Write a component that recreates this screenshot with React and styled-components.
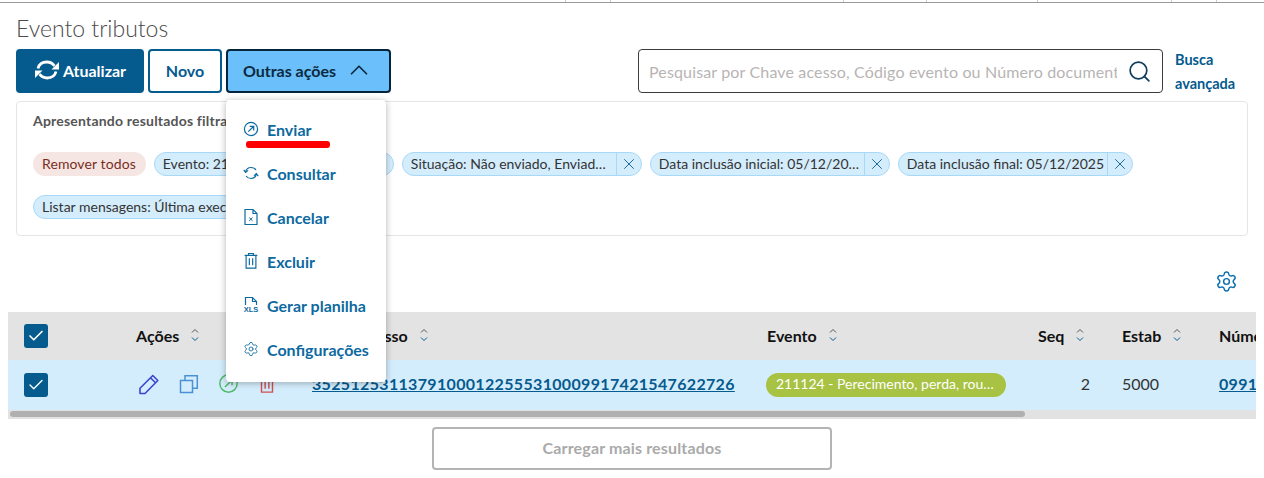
import React from 'react'
import styled, { createGlobalStyle } from 'styled-components'
import { Check, ChevronUp, Search, Settings, X } from 'lucide-react'

const GlobalStyle = createGlobalStyle`
  html, body {
    margin: 0;
    background: #fff;
    overflow: hidden;
  }
  body {
    font-family: Lato, "Open Sans", sans-serif;
    color: #333;
  }
  * {
    box-sizing: border-box;
  }
`

const PRIMARY = '#055a8e'
const COLUMNS = '128px 176px 455px 271px 84px 97px 1fr'
const TICKS = [566, 45, 233, 83, 111, 134, 45]

const SyncIcon = ({ size = 26 }) => (
  <svg width={size} height={size} viewBox="0 0 26 26" fill="none" stroke="currentColor" strokeWidth="2.8">
    <path d="M4 11.500C5 7.500 8.500 5 12.800 5c3.200 0 5.800 1.400 7.600 3.800" />
    <path d="M22 14.500c-1 4-4.500 6.500-8.800 6.500-3.200 0-5.800-1.400-7.600-3.800" />
    <path d="M25 5v7.500h-7.500z" fill="currentColor" stroke="none" />
    <path d="M1 21v-7.500h7.500z" fill="currentColor" stroke="none" />
  </svg>
)

const SendIcon = ({ size = 16, width = 1.2 }) => (
  <svg width={size} height={size} viewBox="0 0 16 16" fill="none" stroke="currentColor" strokeWidth={width}>
    <circle cx="8" cy="8" r="6.600" />
    <path d="M5.300 10.700 10.500 5.500M6.600 5.300h4.100v4.100" />
  </svg>
)

const RefreshIcon = () => (
  <svg width="16" height="16" viewBox="0 0 16 16" fill="none" stroke="currentColor" strokeWidth="1.200">
    <path d="M2.600 7C3.200 4.200 5.400 2.500 8 2.500c2 0 3.800.9 5 2.500" />
    <path d="M13.400 9c-.6 2.800-2.800 4.500-5.400 4.500-2 0-3.800-.9-5-2.500" />
    <path d="M.8 4.800 2.600 7.400l2.500-2M15.200 11.200 13.400 8.600l-2.500 2" />
  </svg>
)

const FileXIcon = () => (
  <svg width="16" height="18" viewBox="0 0 16 18" fill="none" stroke="currentColor" strokeWidth="1.200">
    <path d="M2 1.500h8l4 4v11H2zM10 1.500v4h4" />
    <path d="m6.200 9.500 3.400 3.400m0-3.400-3.400 3.400" strokeWidth="1" />
  </svg>
)

const TrashIcon = ({ size = 16, width = 1.2 }) => (
  <svg width={size} height={size * 1.1} viewBox="0 0 16 18" fill="none" stroke="currentColor" strokeWidth={width}>
    <path d="M1.500 3.500h13M5.500 3.500V1.500h5v2M3 3.500v13h10v-13M6.300 6.500v7M9.700 6.500v7" />
  </svg>
)

const XlsIcon = () => (
  <svg width="16" height="18" viewBox="0 0 16 18" fill="none" stroke="currentColor" strokeWidth="1.200">
    <path d="M2.500 9V1.500h7l4 4V9M9.500 1.500v4h4" />
    <text x="8" y="16" textAnchor="middle" fontSize="7.500" fontWeight="700" fill="currentColor" stroke="none" fontFamily="Liberation Sans, sans-serif">XLS</text>
  </svg>
)

const PencilIcon = () => (
  <svg width="22" height="22" viewBox="0 0 22 22" fill="none" stroke="currentColor" strokeWidth="1.600" strokeLinejoin="round">
    <path d="M2 20.500v-5.200L14.800 2.500l5 5L7 20.500zM12.500 4.800l5 5" />
  </svg>
)

const CopyIcon = () => (
  <svg width="20" height="20" viewBox="0 0 20 20" fill="none" stroke="currentColor" strokeWidth="1.500">
    <path d="M1.500 6.500h12v12h-12zM6 6.500V1.800h12.300v12.400h-4.800" />
  </svg>
)

const SortIcon = () => (
  <svg width="10" height="16" viewBox="0 0 10 16" fill="none" stroke="currentColor" strokeWidth="1">
    <path d="M2 5.500 5 2.500l3 3" stroke="#555" />
    <path d="M2 10.500 5 13.500l3-3" stroke={PRIMARY} />
  </svg>
)

const MENU = [
  { label: 'Enviar', icon: <SendIcon />, marked: true },
  { label: 'Consultar', icon: <RefreshIcon /> },
  { label: 'Cancelar', icon: <FileXIcon /> },
  { label: 'Excluir', icon: <TrashIcon /> },
  { label: 'Gerar planilha', icon: <XlsIcon /> },
  { label: 'Configurações', icon: <Settings size={16} strokeWidth={1.3} /> },
]

const FILTERS = [
  'Evento: 211124 - Perecimento, perda, roubo',
  'Situação: Não enviado, Enviado, Rejeitado',
  'Data inclusão inicial: 05/12/2025',
  'Data inclusão final: 05/12/2025',
  'Listar mensagens: Última execução',
]

const HEADERS = ['Ações', 'Chave acesso', 'Evento', 'Seq', 'Estab', 'Número']

const App = () => (
  <>
    <GlobalStyle />
    <TopBar>
      {TICKS.map((w, i) => <Tick key={i} $width={w} />)}
    </TopBar>
    <Main>
      <Title>Evento tributos</Title>
      <Toolbar>
        <PrimaryButton><SyncIcon />Atualizar</PrimaryButton>
        <OutlineButton>Novo</OutlineButton>
        <MenuWrap>
          <ActionsButton>Outras ações<ChevronUp size={30} strokeWidth={1.4} /></ActionsButton>
          <Dropdown>
            {MENU.map(item => (
              <DropdownItem key={item.label}>
                <ItemIcon>{item.icon}</ItemIcon>
                {item.label}
                {item.marked && <RedMark />}
              </DropdownItem>
            ))}
          </Dropdown>
        </MenuWrap>
        <SearchBox>
          <SearchInput placeholder="Pesquisar por Chave acesso, Código evento ou Número documento" />
          <Search size={25} strokeWidth={1.6} color="#0d3c5c" />
        </SearchBox>
        <AdvancedLink href="#">Busca avançada</AdvancedLink>
      </Toolbar>
      <FilterPanel>
        <FilterTitle>Apresentando resultados filtrados por:</FilterTitle>
        <Chips>
          <RemoveChip>Remover todos</RemoveChip>
          {FILTERS.map(f => (
            <Chip key={f}>
              <ChipLabel>{f}</ChipLabel>
              <ChipClose><X size={18} strokeWidth={1.2} /></ChipClose>
            </Chip>
          ))}
        </Chips>
      </FilterPanel>
      <GearRow>
        <Settings size={23} strokeWidth={1.5} color="#0a6fb0" />
      </GearRow>
      <TableBox>
        <HeaderRow>
          <CheckCell><CheckBox><Check size={18} strokeWidth={2.2} /></CheckBox></CheckCell>
          {HEADERS.map(h => (
            <HeaderCell key={h}>{h}{h !== 'Número' && <SortIcon />}</HeaderCell>
          ))}
        </HeaderRow>
        <BodyRow>
          <CheckCell><CheckBox><Check size={18} strokeWidth={1.800} /></CheckBox></CheckCell>
          <ActionsCell>
            <RowIcon $color="#3a45d0"><PencilIcon /></RowIcon>
            <RowIcon $color="#4a90d4"><CopyIcon /></RowIcon>
            <RowIcon $color="#4dba68"><SendIcon size={21} width={1.100} /></RowIcon>
            <RowIcon $color="#d0504f"><TrashIcon size={18} width={1.300} /></RowIcon>
          </ActionsCell>
          <Cell><TableLink href="#">35251253113791000122555310009917421547622726</TableLink></Cell>
          <BadgeCell><Badge>211124 - Perecimento, perda, roubo ou furto</Badge></BadgeCell>
          <NumberCell>2</NumberCell>
          <Cell>5000</Cell>
          <Cell><TableLink href="#">099174215</TableLink></Cell>
        </BodyRow>
        <ScrollTrack><ScrollThumb /></ScrollTrack>
      </TableBox>
      <LoadMore>Carregar mais resultados</LoadMore>
    </Main>
  </>
)

export default App

const TopBar = styled.div`
  display: flex;
  height: 3px;
  border-bottom: 1px solid #999;
`
const Tick = styled.div`
  width: ${({ $width }) => $width}px;
  border-right: 1px solid #ccc;
`
const Main = styled.div`
  padding: 0 16px;
`
const Title = styled.h1`
  margin: 0;
  padding-top: 10px;
  height: 46px;
  font-size: 23px;
  line-height: 30px;
  font-weight: 300;
  color: #4a4a4a;
`
const Toolbar = styled.div`
  display: flex;
  align-items: stretch;
  height: 44px;
  gap: 4px;
`
const BaseButton = styled.button`
  display: flex;
  align-items: center;
  justify-content: center;
  font-family: inherit;
  font-size: 16px;
  font-weight: 700;
  border-radius: 4px;
  padding: 0 0 2px;
`
const PrimaryButton = styled(BaseButton)`
  width: 128px;
  gap: 3px;
  color: #fff;
  background: ${PRIMARY};
  border: 2px solid ${PRIMARY};
`
const OutlineButton = styled(BaseButton)`
  width: 74px;
  color: ${PRIMARY};
  background: #fff;
  border: 2px solid ${PRIMARY};
`
const MenuWrap = styled.div`
  position: relative;
  display: flex;
`
const ActionsButton = styled(BaseButton)`
  width: 165px;
  gap: 8px;
  color: #0b2a40;
  background: #6bbffa;
  border: 2px solid #04243c;
`
const Dropdown = styled.div`
  position: absolute;
  top: 51px;
  left: 0;
  z-index: 10;
  width: 160px;
  padding: 9px 0;
  background: #fff;
  border-radius: 4px;
  box-shadow: 0 1px 7px rgba(0, 0, 0, 0.3);
`
const DropdownItem = styled.div`
  position: relative;
  display: flex;
  align-items: center;
  height: 44px;
  padding: 0 0 4px 16px;
  gap: 8px;
  font-size: 16px;
  font-weight: 700;
  color: #0d6a9f;
  white-space: nowrap;
`
const ItemIcon = styled.span`
  display: flex;
  justify-content: center;
  width: 17px;
`
const RedMark = styled.span`
  position: absolute;
  left: 20px;
  top: 32px;
  width: 84px;
  height: 7px;
  border-radius: 3px;
  background: #f00;
`
const SearchBox = styled.div`
  display: flex;
  align-items: center;
  width: 525px;
  margin-left: auto;
  margin-right: 8px;
  padding: 0 10px;
  gap: 10px;
  border: 1px solid #3c3c3c;
  border-radius: 4px;
`
const SearchInput = styled.input`
  flex: 1;
  min-width: 0;
  padding: 0;
  border: 0;
  outline: 0;
  font-family: Lato, sans-serif;
  font-size: 16px;
  letter-spacing: 0.15px;
  &::placeholder {
    color: #b8b4b4;
  }
`
const AdvancedLink = styled.a`
  width: 73px;
  margin-top: -1px;
  font-size: 14.5px;
  font-weight: 700;
  line-height: 24px;
  color: ${PRIMARY};
  text-decoration: none;
`
const FilterPanel = styled.div`
  height: 135px;
  margin-top: 8px;
  padding: 10px 16px 0;
  border: 1px solid #e6e6e6;
  border-radius: 4px;
`
const FilterTitle = styled.div`
  font-size: 14px;
  font-weight: 700;
  letter-spacing: 0.2px;
  line-height: 18px;
  color: #555;
`
const Chips = styled.div`
  display: flex;
  flex-wrap: wrap;
  gap: 19px 8px;
  margin-top: 22px;
`
const RemoveChip = styled.div`
  height: 24px;
  padding: 0 10px 0 9px;
  font-size: 14px;
  letter-spacing: 0.1px;
  line-height: 23px;
  color: #7a2e22;
  background: #f5e6e3;
  border-radius: 12px;
`
const Chip = styled.div`
  display: flex;
  height: 24px;
  background: #d4edfc;
  border: 1px solid #a8d8f8;
  border-radius: 12px;
`
const ChipLabel = styled.span`
  max-width: 213px;
  padding: 0 3px 0 8px;
  font-size: 14px;
  line-height: 21px;
  color: #333;
  white-space: nowrap;
  overflow: hidden;
  text-overflow: ellipsis;
`
const ChipClose = styled.span`
  display: flex;
  align-items: center;
  justify-content: center;
  width: 25px;
  color: #0d5c8c;
  border-left: 1px solid #a8d8f8;
`
const GearRow = styled.div`
  display: flex;
  justify-content: flex-end;
  align-items: center;
  height: 76px;
  padding-right: 10px;
  padding-top: 14px;
`
const TableBox = styled.div`
  margin: 0 -8px;
  overflow: hidden;
`
const HeaderRow = styled.div`
  display: grid;
  grid-template-columns: ${COLUMNS};
  align-items: center;
  height: 48px;
  background: #e3e3e3;
`
const BodyRow = styled(HeaderRow)`
  height: 50px;
  background: #d4edfc;
`
const CheckCell = styled.div`
  padding-left: 16px;
`
const CheckBox = styled.div`
  display: flex;
  align-items: center;
  justify-content: center;
  width: 24px;
  height: 24px;
  color: #fff;
  background: ${PRIMARY};
  border-radius: 3px;
`
const HeaderCell = styled.div`
  display: flex;
  align-items: center;
  gap: 11px;
  padding-bottom: 2px;
  font-size: 16px;
  font-weight: 700;
  color: #111;
  white-space: nowrap;
`
const Cell = styled.div`
  padding-bottom: 4px;
  font-size: 16px;
  color: #333;
  white-space: nowrap;
`
const BadgeCell = styled.div`
  margin-left: -1px;
`
const NumberCell = styled(Cell)`
  padding-right: 32px;
  text-align: right;
`
const ActionsCell = styled.div`
  display: flex;
  align-items: center;
  gap: 19px;
  padding: 0 0 3px 2px;
`
const RowIcon = styled.span`
  display: flex;
  color: ${({ $color }) => $color};
`
const TableLink = styled.a`
  font-size: 16px;
  font-weight: 700;
  letter-spacing: 0.33px;
  color: ${PRIMARY};
  text-decoration: underline;
`
const Badge = styled.div`
  width: 240px;
  height: 24px;
  padding: 0 10px;
  font-size: 14px;
  line-height: 22px;
  color: #fff;
  background: #a8c244;
  border-radius: 12px;
  white-space: nowrap;
  overflow: hidden;
  text-overflow: ellipsis;
`
const ScrollTrack = styled.div`
  height: 9px;
  padding: 1px 2px 2px;
  background: #e2e2e2;
`
const ScrollThumb = styled.div`
  width: 1015px;
  height: 6px;
  background: #b0b0b0;
  border-radius: 3px;
`
const LoadMore = styled.button`
  display: block;
  width: 400px;
  height: 43px;
  margin: 8px auto 0;
  padding: 0 0 2px;
  font-family: inherit;
  font-size: 16px;
  font-weight: 700;
  letter-spacing: 0.15px;
  color: #aaa;
  background: #fff;
  border: 2px solid #b4b4b4;
  border-radius: 4px;
`
